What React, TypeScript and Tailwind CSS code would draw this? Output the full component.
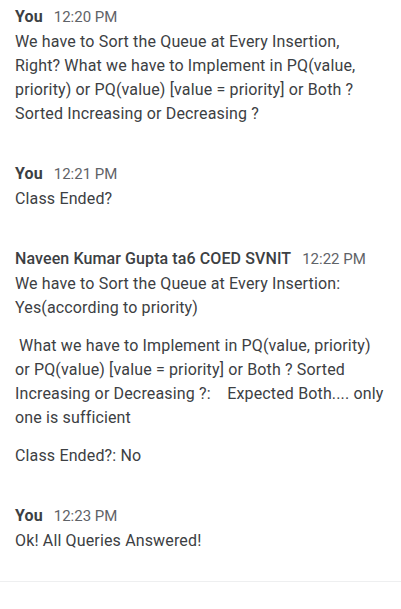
const messages = [
  {
    sender: "You",
    self: true,
    time: "12:20 PM",
    paragraphs: [
      "We have to Sort the Queue at Every Insertion, Right? What we have to Implement in PQ(value, priority) or PQ(value) [value = priority] or Both ? Sorted Increasing or Decreasing ?",
    ],
  },
  {
    sender: "You",
    self: true,
    time: "12:21 PM",
    paragraphs: ["Class Ended?"],
  },
  {
    sender: "Naveen Kumar Gupta ta6 COED SVNIT",
    self: false,
    time: "12:22 PM",
    paragraphs: [
      "We have to Sort the Queue at Every Insertion: Yes(according to priority)",
      "\u00a0What we have to Implement in PQ(value, priority) or PQ(value) [value = priority] or Both ? Sorted Increasing or Decreasing ?:\u00a0\u00a0\u00a0 Expected Both.... only one is sufficient",
      "Class Ended?: No",
    ],
  },
  {
    sender: "You",
    self: true,
    time: "12:23 PM",
    paragraphs: ["Ok! All Queries Answered!"],
  },
];

function Message({ m }: { m: (typeof messages)[number] }) {
  return (
    <div className="flex flex-col">
      <div className="flex items-baseline gap-[11px] leading-6 mb-px">
        <span
          className={
            m.self
              ? "text-[16px] font-bold tracking-[0.1px] text-[#3c4043]"
              : "text-[16px] font-medium tracking-[0.1px] text-[#3c4043]"
          }
        >
          {m.sender}
        </span>
        <span className="text-[15px] text-[#5f6368]">{m.time}</span>
      </div>
      <div className="flex flex-col gap-[14px]">
        {m.paragraphs.map((p, i) => (
          <p
            key={i}
            className="text-[16px] leading-6 tracking-[0.15px] text-[#3c4043] whitespace-pre-wrap"
          >
            {p}
          </p>
        ))}
      </div>
    </div>
  );
}

export default function App() {
  return (
    <div
      className="w-[401px] h-[609px] bg-white overflow-hidden"
      style={{ fontFamily: "Roboto, 'Noto Sans', sans-serif" }}
    >
      <div className="flex flex-col gap-9 pl-[15px] pr-4 pt-[5px] pb-7">
        {messages.map((m, i) => (
          <Message key={i} m={m} />
        ))}
      </div>
      <div className="h-px bg-[#eeeff0]" />
    </div>
  );
}
